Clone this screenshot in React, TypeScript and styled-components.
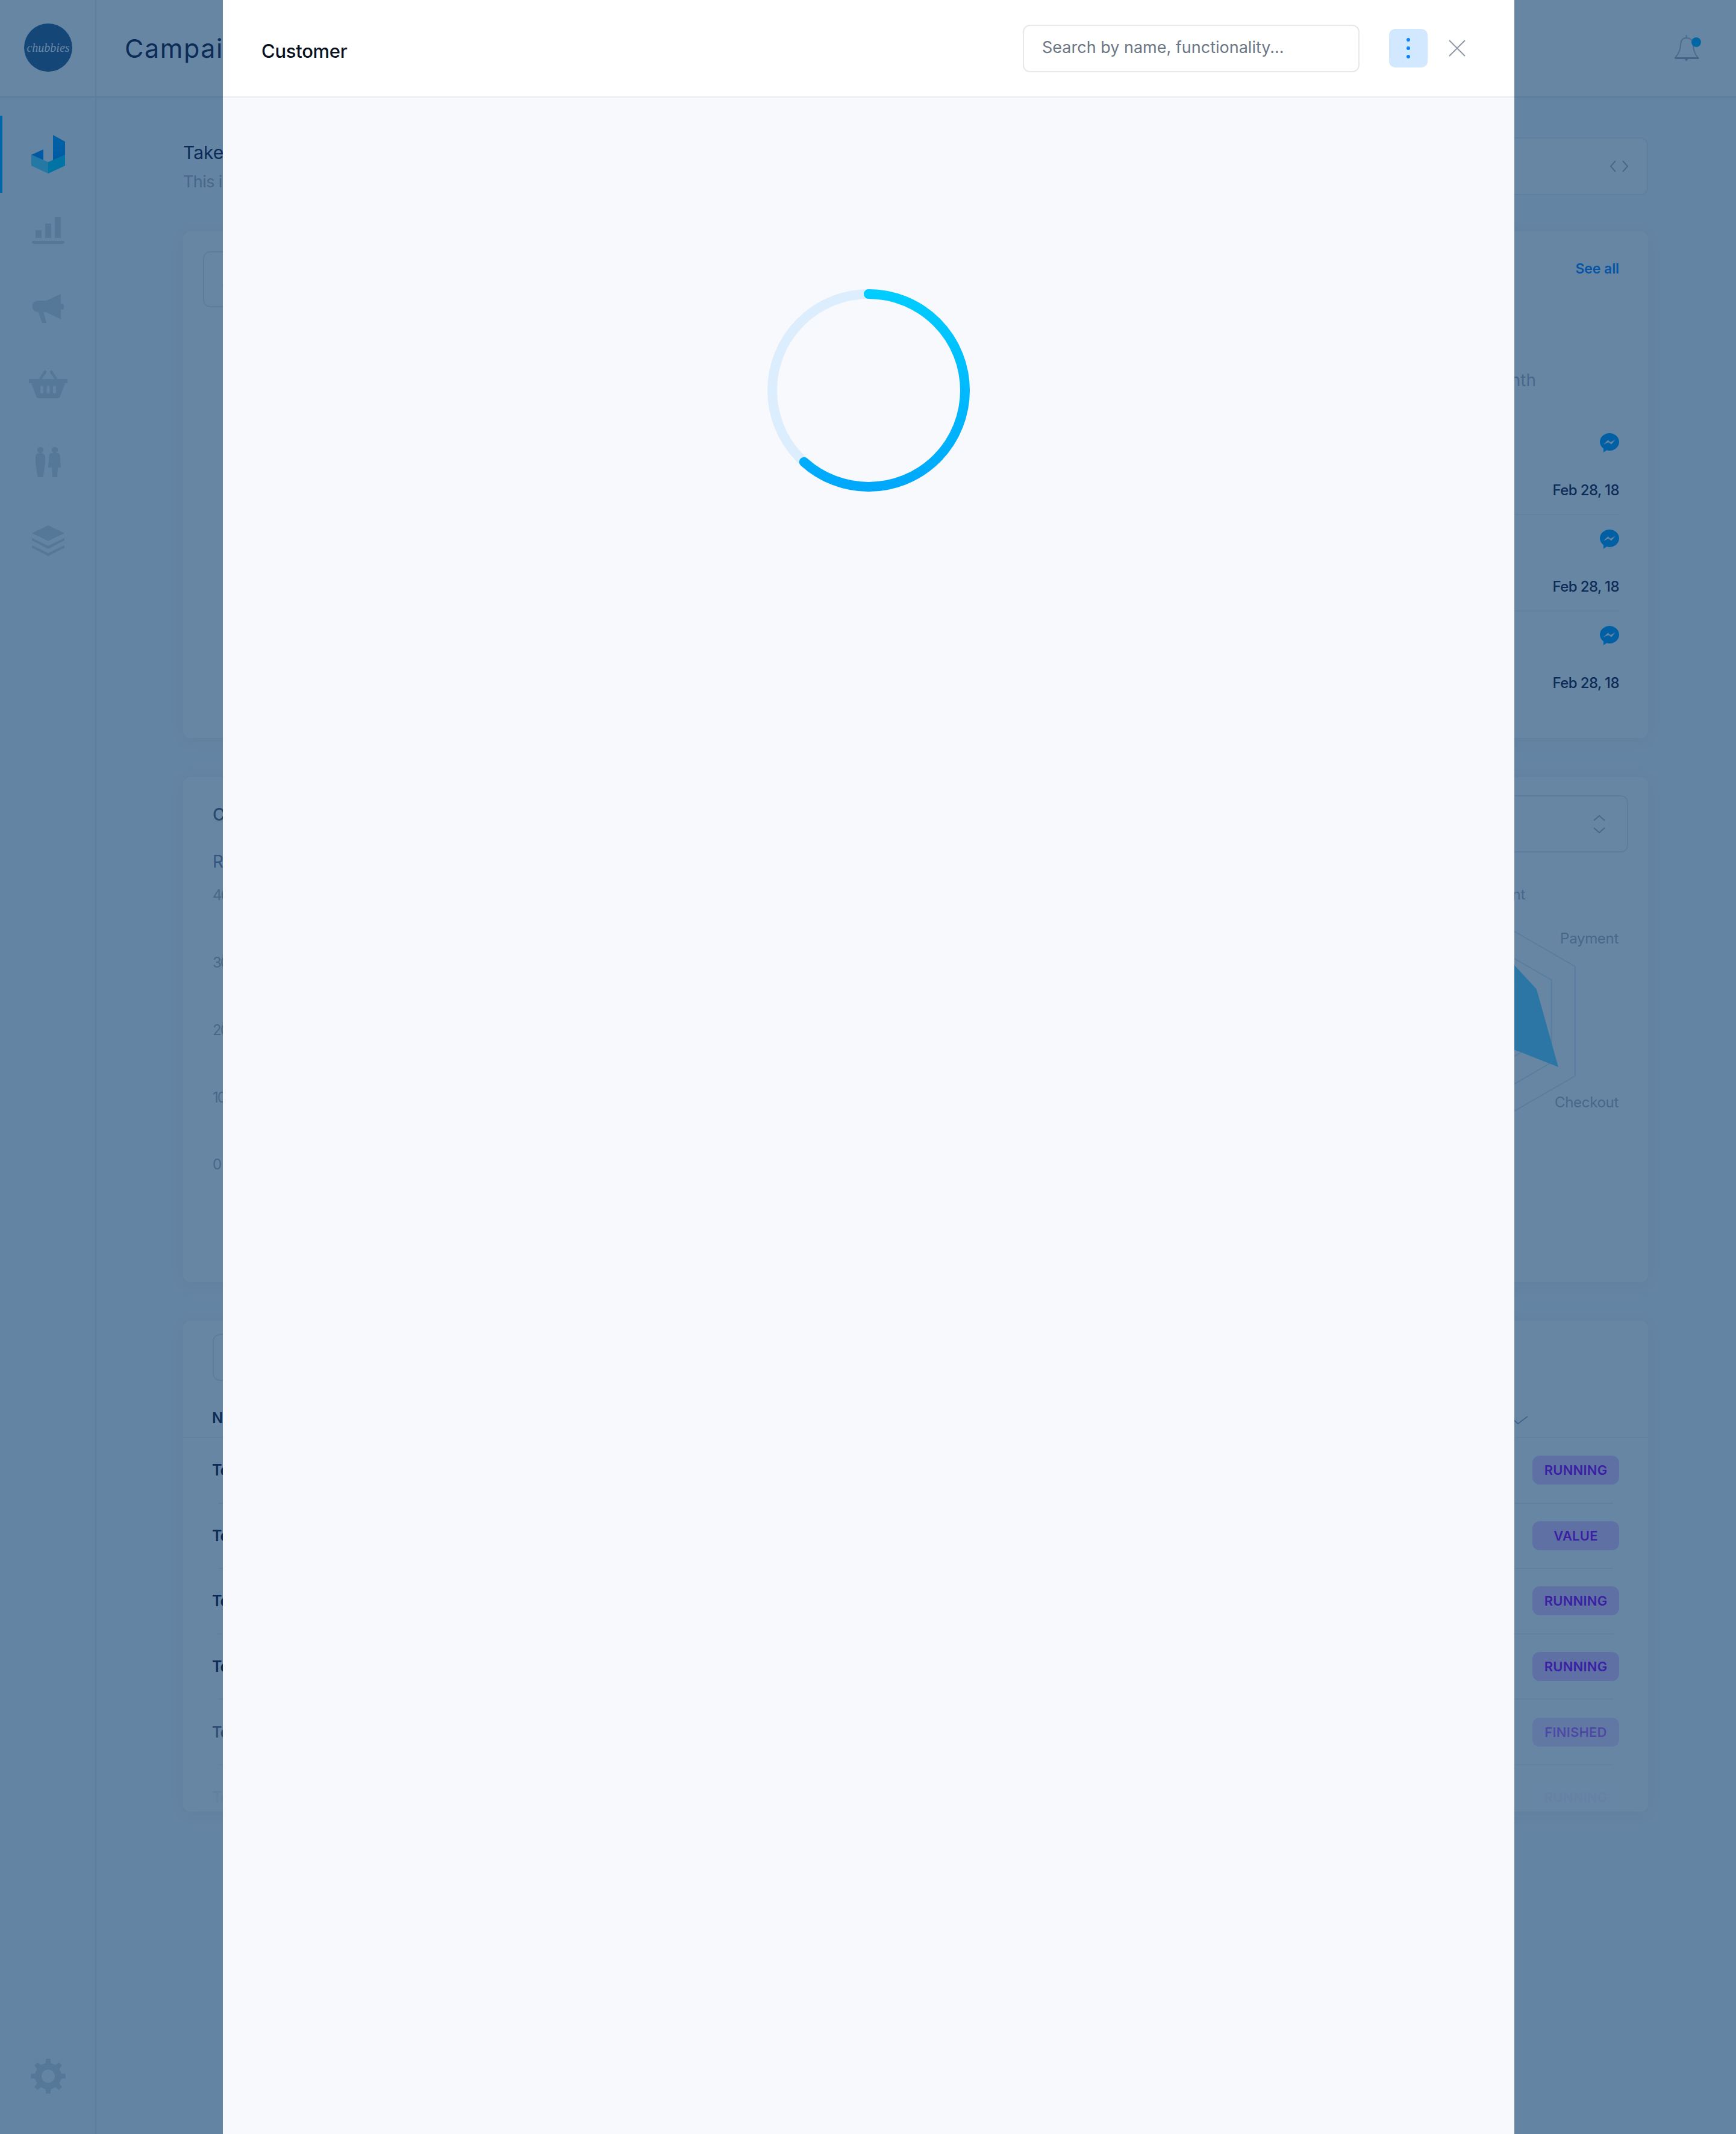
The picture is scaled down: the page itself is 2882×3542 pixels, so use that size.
import styled, { createGlobalStyle } from "styled-components";

const GlobalStyle = createGlobalStyle`
  html, body {
    margin: 0;
    padding: 0;
    background: #f8f9fd;
    font-family: Inter, "Liberation Sans", sans-serif;
    color: #1c2040;
  }
  * { box-sizing: border-box; }
`;

const NAV_ICON = "#d2dce1";
const LINE = "#dee8f0";
const FAINT_LINE = "#f0f3f7";
const FIELD_LINE = "#e2e8ef";
const MUTED = "#b0b4bd";

const campaigns = [
  { name: "Test campaign", status: "RUNNING" },
  { name: "Test campaign", status: "VALUE" },
  { name: "Test campaign", status: "RUNNING" },
  { name: "Test campaign", status: "RUNNING" },
  { name: "Test campaign", status: "FINISHED", faded: 0.6 },
  { name: "Test campaign", status: "RUNNING", faded: 0.05 },
];

const BrandIcon = () => (
  <svg width="64" height="64" viewBox="0 0 64 64">
    <defs>
      <linearGradient id="brandTop" x1="0" y1="0" x2="0" y2="1">
        <stop offset="0" stopColor="#00a6ff" />
        <stop offset="1" stopColor="#0090ff" />
      </linearGradient>
    </defs>
    <polygon points="40,0 60,11 60,33 40,43" fill="url(#brandTop)" />
    <polygon points="4,33 24,24 24,42" fill="#0090ff" />
    <polygon points="4,33 32,45 32,64 4,51" fill="#55dcff" />
    <polygon points="32,45 60,33 60,51 32,64" fill="#00d0ff" />
  </svg>
);

const ChartIcon = () => (
  <svg width="64" height="64" viewBox="0 0 64 64" fill={NAV_ICON}>
    <rect x="11" y="30" width="10" height="13" />
    <rect x="27" y="19" width="10" height="24" />
    <rect x="43" y="8" width="10" height="35" />
    <path d="M5 48h54v1a4 4 0 0 1-4 4H9a4 4 0 0 1-4-4z" />
  </svg>
);

const MegaphoneIcon = () => (
  <svg width="64" height="64" viewBox="0 0 64 64" fill={NAV_ICON}>
    <path d="M15 19h14L53 8v42L28 38H15a9.500 9.500 0 0 1 0-19z" />
    <rect x="52" y="24" width="6" height="10" rx="3" />
    <polygon points="15,37 22,56 29,56 24,37" />
  </svg>
);

const BasketIcon = () => (
  <svg width="64" height="64" viewBox="0 0 64 64" fill={NAV_ICON}>
    <path d="M19 21l8-12M45 21l-8-12" stroke={NAV_ICON} strokeWidth="4.500" strokeLinecap="round" />
    <rect x="0" y="21" width="64" height="7" />
    <path
      fillRule="evenodd"
      d="M4 28h56l-8 22q-1 3-4 3H16q-3 0-4-3zM19 34.500a2.500 2.500 0 0 1 5 0v8a2.500 2.500 0 0 1-5 0zM29.500 34.500a2.500 2.500 0 0 1 5 0v8a2.500 2.500 0 0 1-5 0zM40 34.500a2.500 2.500 0 0 1 5 0v8a2.500 2.500 0 0 1-5 0z"
    />
  </svg>
);

const PeopleIcon = () => (
  <svg width="64" height="64" viewBox="0 0 64 64" fill={NAV_ICON}>
    <circle cx="19" cy="11" r="5.300" />
    <circle cx="43" cy="11" r="5.300" />
    <path d="M11 22q0-6 8-6t8 6v11l-3.500 23h-9L11 33z" />
    <path d="M38 16h10q3 0 3.500 4L53 40H32l1.500-20q.5-4 4.500-4z" />
    <path d="M38 40h10l-1 16h-8z" />
  </svg>
);

const LayersIcon = () => (
  <svg width="64" height="64" viewBox="0 0 64 64" fill={NAV_ICON}>
    <polygon points="5,21 32,8 59,21 32,34" />
    <polygon points="5,29 32,42 59,29 59,33 32,47 5,33" />
    <polygon points="5,41 32,54 59,41 59,45 32,59 5,45" />
  </svg>
);

const GearIcon = () => (
  <svg width="64" height="64" viewBox="0 0 64 64" fill={NAV_ICON}>
    <circle cx="32" cy="32" r="16.500" fill="none" stroke={NAV_ICON} strokeWidth="11" />
    {[0, 45, 90, 135, 180, 225, 270, 315].map((deg) => (
      <polygon key={deg} points="28.500,3 35.500,3 37,14 27,14" transform={`rotate(${deg} 32 32)`} />
    ))}
  </svg>
);

const BellIcon = () => (
  <svg width="48" height="48" viewBox="0 0 48 48" fill="none">
    <path d="M21.500 2v5" stroke="#b4bcc8" strokeWidth="2" />
    <path d="M21.500 7C15 7 12 12 12 19c0 9-4 15-9 21h38c-5-6-8-12-8-21 0-7-4-12-11.500-12z" stroke="#b4bcc8" strokeWidth="2" />
    <path d="M3 40.500h39" stroke="#a0aab8" strokeWidth="3" />
    <path d="M18.500 42h6l-3 3.500z" fill="#a0aab8" />
    <circle cx="38" cy="14" r="8" fill="#00b0ff" />
  </svg>
);

const MessengerIcon = () => (
  <svg width="32" height="32" viewBox="0 0 32 32">
    <path d="M16 0c8.800 0 16 6.300 16 14.500S24.800 29 16 29c-1.700 0-3.300-.2-4.800-.7L6 32v-6.500C2.300 22.800 0 19 0 14.500 0 6.300 7.200 0 16 0z" fill="#009dff" />
    <path d="M6 18.500l7.500-7 4 3.500 8-4-6.500 7.500-4.500-3.500z" fill="#fff" />
  </svg>
);

const SortIcon = () => (
  <svg width="20" height="32" viewBox="0 0 20 32" fill="none" stroke="#aab4c0" strokeWidth="2">
    <path d="M1 10l9-8 9 8M1 22l9 8 9-8" />
  </svg>
);

const CodeIcon = () => (
  <svg width="32" height="20" viewBox="0 0 32 20" fill="none" stroke="#aab4c0" strokeWidth="2">
    <path d="M10 1L2 10l8 9M22 1l8 9-8 9" />
  </svg>
);

const SortDownIcon = () => (
  <svg width="28" height="16" viewBox="0 0 28 16" fill="none" stroke="#9fb0c0" strokeWidth="2">
    <path d="M2 6l9 8L27 2" />
  </svg>
);

const RADAR_CX = 267;
const RADAR_CY = 235;

const hexVertex = (r: number, a: number) => {
  const rad = (a * Math.PI) / 180;
  return [RADAR_CX + r * Math.sin(rad), RADAR_CY - r * Math.cos(rad)];
};

const hexPoints = (r: number) =>
  [0, 60, 120, 180, 240, 300].map((a) => hexVertex(r, a).join(",")).join(" ");

const RadarChart = () => (
  <svg width="500" height="420" viewBox="0 0 500 420">
    {[182, 137, 91, 46].map((r) => (
      <polygon key={r} points={hexPoints(r)} fill="none" stroke="#f0f3f6" strokeWidth="2" />
    ))}
    <polygon points="267,80 361,182 397,311 267,260 180,300 150,150" fill="#6ad8ff" />
    {[182, 137, 91, 46].map((r) => (
      <polygon key={r} points={hexPoints(r)} fill="none" stroke="#8fd8f6" strokeOpacity="0.25" strokeWidth="2" />
    ))}
    <RadarLabel x="342" y="33">Engagement</RadarLabel>
    <RadarLabel x="497" y="106">Payment</RadarLabel>
    <RadarLabel x="497" y="378">Checkout</RadarLabel>
  </svg>
);

const SPINNER_R = 160;
const SPINNER_LEN = 2 * Math.PI * SPINNER_R;

const Spinner = () => (
  <svg width="336" height="336" viewBox="0 0 336 336" fill="none">
    <defs>
      {/* the arc is rotated by -90deg, so the gradient runs along its x axis */}
      <linearGradient id="spinGrad" x1="1" y1="0" x2="0" y2="0">
        <stop offset="0" stopColor="#00ccff" />
        <stop offset="1" stopColor="#00a8fb" />
      </linearGradient>
    </defs>
    <circle cx="168" cy="168" r={SPINNER_R} stroke="#dceefd" strokeWidth="16" />
    <circle
      cx="168"
      cy="168"
      r={SPINNER_R}
      stroke="url(#spinGrad)"
      strokeWidth="16"
      strokeLinecap="round"
      strokeDasharray={`${SPINNER_LEN * (222 / 360)} ${SPINNER_LEN}`}
      transform="rotate(-90 168 168)"
    />
  </svg>
);

export default function App() {
  return (
    <>
      <GlobalStyle />
      <Shell>
        <Sidebar>
          <div>
            <LogoCell>
              <Logo>chubbies</Logo>
            </LogoCell>
            <Nav>
              <NavItem $active><BrandIcon /></NavItem>
              <NavItem><ChartIcon /></NavItem>
              <NavItem><MegaphoneIcon /></NavItem>
              <NavItem><BasketIcon /></NavItem>
              <NavItem><PeopleIcon /></NavItem>
              <NavItem><LayersIcon /></NavItem>
            </Nav>
          </div>
          <SidebarFoot>
            <NavItem><GearIcon /></NavItem>
          </SidebarFoot>
        </Sidebar>

        <Main>
          <TopBar>
            <PageHeading>Campaign</PageHeading>
            <BellIcon />
          </TopBar>

          <Content>
            <IntroRow>
              <div>
                <IntroTitle>Take a look at your campaigns</IntroTitle>
                <IntroText>This is the list of everything running</IntroText>
              </div>
              <CodeStrip>
                <CodeIcon />
              </CodeStrip>
            </IntroRow>

            <OverviewCard>
              <SelectBox $height={93}>All campaigns</SelectBox>
              <ActivityPanel>
                <SeeAll>See all</SeeAll>
                <PeriodLabel>This month</PeriodLabel>
                {[0, 1, 2].map((i) => (
                  <ActivityRow key={i} $last={i === 2}>
                    <MessengerIcon />
                    <ActivityDate>Feb 28, 18</ActivityDate>
                  </ActivityRow>
                ))}
              </ActivityPanel>
            </OverviewCard>

            <ChartCard>
              <ChartHeader>
                <ChartTitle>Campaign performance</ChartTitle>
                <ChartSelect>
                  Last 30 days
                  <SortIcon />
                </ChartSelect>
              </ChartHeader>
              <ChartBody>
                <Axis>
                  <AxisTitle>Revenue</AxisTitle>
                  {["40", "30", "20", "10", "0"].map((v) => (
                    <AxisTick key={v}>{v}</AxisTick>
                  ))}
                </Axis>
                <RadarWrap>
                  <RadarChart />
                </RadarWrap>
              </ChartBody>
            </ChartCard>

            <TableCard>
              <TableTools>
                <SelectBox $height={78}>Search</SelectBox>
              </TableTools>
              <TableHead>
                <HeadName>Name</HeadName>
                <SortDownIcon />
              </TableHead>
              {campaigns.map((c, i) => (
                <div key={i} style={c.faded ? { opacity: c.faded } : undefined}>
                  <TableRow>
                    <RowName>{c.name}</RowName>
                    <StatusBadge>{c.status}</StatusBadge>
                  </TableRow>
                  <RowRule />
                </div>
              ))}
            </TableCard>
          </Content>
        </Main>

        <Overlay />

        <Drawer>
          <DrawerHeader>
            <DrawerTitle>Customer</DrawerTitle>
            <DrawerTools>
              <SearchField>Search by name, functionality...</SearchField>
              <MenuButton>
                <MenuDot />
                <MenuDot />
                <MenuDot />
              </MenuButton>
              <CloseButton>
                <svg width="28" height="28" viewBox="0 0 28 28" fill="none" stroke="#8f99a3" strokeWidth="2">
                  <path d="M1 1l26 26M27 1L1 27" />
                </svg>
              </CloseButton>
            </DrawerTools>
          </DrawerHeader>
          <DrawerBody>
            <Spinner />
          </DrawerBody>
        </Drawer>
      </Shell>
    </>
  );
}

const Shell = styled.div`
  display: flex;
  height: 100vh;
  overflow: hidden;
`;

const Sidebar = styled.aside`
  flex: 0 0 160px;
  display: flex;
  flex-direction: column;
  justify-content: space-between;
  border-right: 2px solid ${LINE};
`;

const LogoCell = styled.div`
  height: 162px;
  display: flex;
  align-items: center;
  justify-content: center;
  padding: 0 0 2px 2px;
  background: #fff;
  border-bottom: 2px solid ${LINE};
`;

const Logo = styled.div`
  width: 80px;
  height: 80px;
  border-radius: 50%;
  background: #30608f;
  color: #fff;
  display: flex;
  align-items: center;
  justify-content: center;
  font-family: "Liberation Serif", serif;
  font-style: italic;
  font-size: 20px;
`;

const Nav = styled.nav`
  padding-top: 30px;
`;

const NavItem = styled.div<{ $active?: boolean }>`
  height: 128px;
  display: flex;
  align-items: center;
  justify-content: center;
  padding-left: 2px;
  border-left: 4px solid ${(p) => (p.$active ? "#00b0ff" : "transparent")};
  margin-right: 2px;
  svg {
    margin-left: -2px;
  }
`;

const SidebarFoot = styled.div`
  padding-bottom: 32px;
`;

const Main = styled.main`
  flex: 1;
  min-width: 0;
`;

const TopBar = styled.header`
  height: 162px;
  display: flex;
  align-items: center;
  justify-content: space-between;
  padding: 0 56px 0 47px;
  background: #fff;
  border-bottom: 2px solid ${LINE};
`;

const PageHeading = styled.h1`
  margin: 0;
  font-size: 43px;
  line-height: 50px;
  font-weight: 400;
  letter-spacing: 1.600px;
  color: #1c2040;
`;

const Content = styled.div`
  padding: 66px 146px 0 144px;
`;

const IntroRow = styled.div`
  display: flex;
  justify-content: space-between;
  align-items: flex-start;
  height: 156px;
`;

const IntroTitle = styled.div`
  margin-top: 3px;
  font-size: 30px;
  line-height: 44px;
`;

const IntroText = styled.div`
  margin-top: 7px;
  font-size: 27px;
  line-height: 40px;
  letter-spacing: -0.6px;
  color: ${MUTED};
`;

const CodeStrip = styled.div`
  width: 1000px;
  height: 96px;
  display: flex;
  align-items: center;
  justify-content: flex-end;
  padding-right: 30px;
  background: #fff;
  border: 2px solid #e8eef4;
  border-radius: 12px;
`;

const Card = styled.section`
  background: #fff;
  border-radius: 12px;
  box-shadow: 0 4px 24px rgba(20, 50, 90, 0.06);
`;

const OverviewCard = styled(Card)`
  height: 841px;
  display: flex;
  justify-content: space-between;
  align-items: flex-start;
  padding: 33px 48px 0 33px;
`;

const SelectBox = styled.div<{ $height: number }>`
  width: 800px;
  height: ${(p) => p.$height}px;
  display: flex;
  align-items: center;
  padding-left: 30px;
  font-size: 28px;
  border: 2px solid ${FIELD_LINE};
  border-radius: 12px;
`;

const ActivityPanel = styled.div`
  width: 900px;
  padding-top: 14px;
`;

const SeeAll = styled.div`
  text-align: right;
  font-size: 23px;
  line-height: 30px;
  font-weight: 600;
  letter-spacing: -0.1px;
  color: #0a84ff;
`;

const PeriodLabel = styled.div`
  margin: 150px 138px 44px 0;
  text-align: right;
  font-size: 28px;
  line-height: 40px;
  color: ${MUTED};
`;

const ActivityRow = styled.div<{ $last: boolean }>`
  height: 160px;
  display: flex;
  flex-direction: column;
  align-items: flex-end;
  padding-top: 24px;
  border-bottom: 2px solid ${(p) => (p.$last ? "transparent" : FAINT_LINE)};
`;

const ActivityDate = styled.div`
  margin-top: 48px;
  font-size: 24px;
  line-height: 30px;
  font-weight: 500;
  letter-spacing: -0.6px;
  color: #1c2040;
`;

const ChartCard = styled(Card)`
  height: 838px;
  margin-top: 65px;
  padding: 30px 33px 0 49px;
`;

const ChartHeader = styled.div`
  display: flex;
  justify-content: space-between;
  align-items: flex-start;
  height: 95px;
`;

const ChartTitle = styled.div`
  margin-top: 12px;
  font-size: 28px;
  line-height: 40px;
  font-weight: 500;
  color: #5a6a80;
`;

const ChartSelect = styled.div`
  width: 800px;
  height: 95px;
  display: flex;
  align-items: center;
  justify-content: space-between;
  padding: 0 36px 0 30px;
  font-size: 28px;
  border: 2px solid ${FIELD_LINE};
  border-radius: 12px;
`;

const ChartBody = styled.div`
  display: flex;
  justify-content: space-between;
  align-items: flex-start;
`;

const Axis = styled.div`
  display: flex;
  flex-direction: column;
`;

const AxisTitle = styled.div`
  height: 30px;
  font-size: 28px;
  line-height: 30px;
  color: #7d8a9c;
`;

const AxisTick = styled.div`
  height: 111.750px;
  display: flex;
  align-items: center;
  font-size: 24px;
  letter-spacing: -2px;
  color: ${MUTED};
  &:nth-child(2) {
    margin-top: -15px;
  }
`;

const RadarWrap = styled.div`
  margin: 45px 13px 0 0;
`;

const RadarLabel = styled.text`
  font-size: 24px;
  letter-spacing: -0.3px;
  fill: ${MUTED};
  text-anchor: end;
`;

const TableCard = styled(Card)`
  height: 815px;
  margin-top: 64px;
  overflow: hidden;
`;

const TableTools = styled.div`
  padding: 22px 48px 0 49px;
`;

const TableHead = styled.div`
  height: 95px;
  display: flex;
  align-items: center;
  justify-content: space-between;
  padding: 30px 199px 0 48px;
  border-bottom: 2px solid ${FAINT_LINE};
  svg {
    margin-top: 6px;
  }
`;

const HeadName = styled.div`
  font-size: 24px;
  font-weight: 600;
  letter-spacing: -1px;
  color: #1c2040;
`;

const TableRow = styled.div`
  height: 106.600px;
  display: flex;
  align-items: center;
  justify-content: space-between;
  padding: 0 48px 0 48px;
`;

const RowName = styled.div`
  font-size: 25px;
  font-weight: 600;
  letter-spacing: -1px;
  color: #1c2040;
`;

const StatusBadge = styled.div`
  width: 144px;
  height: 48px;
  display: flex;
  align-items: center;
  justify-content: center;
  font-size: 22px;
  font-weight: 600;
  letter-spacing: 0.2px;
  color: #9300ff;
  background: #eac8ff;
  border-radius: 12px;
`;

const RowRule = styled.div`
  height: 2px;
  margin: 0 58px;
  background: ${FAINT_LINE};
`;

const Overlay = styled.div`
  position: fixed;
  inset: 0;
  background: rgba(2, 53, 103, 0.6);
`;

const Drawer = styled.div`
  position: fixed;
  top: 0;
  bottom: 0;
  left: 370px;
  width: 2144px;
  display: flex;
  flex-direction: column;
  background: #f8f9fd;
`;

const DrawerHeader = styled.header`
  height: 162px;
  display: flex;
  align-items: center;
  justify-content: space-between;
  padding: 0 81px 0 64px;
  background: #fff;
  border-bottom: 2px solid #e9ebf0;
`;

const DrawerTitle = styled.h2`
  margin: 10px 0 0;
  font-size: 31px;
  line-height: 40px;
  font-weight: 500;
  letter-spacing: -0.3px;
  color: #08121e;
`;

const DrawerTools = styled.div`
  display: flex;
  align-items: center;
`;

const SearchField = styled.div`
  width: 559px;
  height: 79px;
  display: flex;
  align-items: center;
  padding: 0 0 3px 30px;
  font-size: 27px;
  color: #6b7785;
  background: #fff;
  border: 2px solid #e6e8eb;
  border-radius: 12px;
`;

const MenuButton = styled.div`
  width: 64px;
  height: 64px;
  margin-left: 49px;
  display: flex;
  flex-direction: column;
  align-items: center;
  justify-content: center;
  gap: 8px;
  background: #d2e8ff;
  border-radius: 10px;
`;

const MenuDot = styled.span`
  width: 6px;
  height: 6px;
  border-radius: 50%;
  background: #0a84ff;
`;

const CloseButton = styled.div`
  margin-left: 35px;
  display: flex;
`;

const DrawerBody = styled.div`
  flex: 1;
  display: flex;
  justify-content: center;
  align-items: flex-start;
  padding: 318px 0 0 0;
`;
